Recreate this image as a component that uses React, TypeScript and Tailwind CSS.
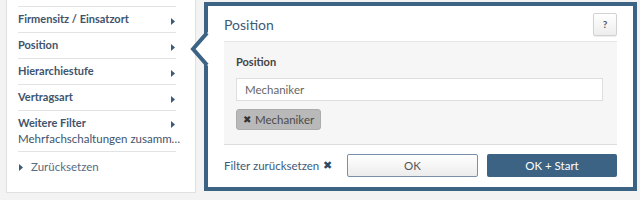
import React from "react";

const filters = ["Firmensitz / Einsatzort", "Position", "Hierarchiestufe", "Vertragsart"];

function Caret({ className = "" }: { className?: string }) {
  return (
    <svg width="4" height="7" viewBox="0 0 4 7" className={className}>
      <path d="M0 0 L4 3.5 L0 7 Z" fill="#3d5a7a" />
    </svg>
  );
}

function Sidebar() {
  return (
    <div className="ml-[6px] h-[193px] w-[190px] shrink-0 border-x border-b border-[#e0e0e0] bg-white pl-[11px] pr-[19px] pt-[6px]">
      {filters.map((f) => (
        <div
          key={f}
          className="flex h-[26px] items-center justify-between border-t border-[#e3e3e3] pr-[1px] text-[11px] font-bold text-[#3f536b]"
        >
          <span>{f}</span>
          <Caret className="mt-[3px]" />
        </div>
      ))}
      <div className="h-[41px] border-t border-[#e3e3e3] pt-[4px] text-[11.5px] leading-[16px] text-[#3f536b]">
        <div className="flex items-center justify-between pr-[1px]">
          <span className="text-[11px] font-bold">Weitere Filter</span>
          <Caret className="mt-[3px]" />
        </div>
        <div className="whitespace-nowrap">Mehrfachschaltungen zusamm…</div>
      </div>
      <div className="flex h-[30px] items-center gap-[8px] border-t border-[#e3e3e3] pt-[1px] text-[11.5px] text-[#566b83]">
        <Caret className="ml-[1px] mt-[1px]" />
        <span>Zurücksetzen</span>
      </div>
    </div>
  );
}

function Popup() {
  return (
    <div className="relative ml-[8px] mt-[2px] flex h-[189px] w-[433px] flex-col border-4 border-[#3d6384] bg-white px-[16px]">
      <svg
        width="20"
        height="34"
        viewBox="0 0 20 34"
        className="absolute left-[-18px] top-[26px]"
      >
        <path d="M18 0 L3 17 L18 34 Z" fill="white" />
        <path d="M17 1 L3 17 L17 33" fill="none" stroke="#3d6384" strokeWidth="4" />
      </svg>
      <div className="flex h-[35px] shrink-0 items-center justify-between">
        <span className="mt-[1px] text-[14px] text-[#3d5a78]">Position</span>
        <button className="mt-[2px] h-[23px] w-[24px] rounded-[2px] border border-[#d2d2d2] bg-gradient-to-b from-white to-[#ededed] text-[10px] font-bold text-[#555] shadow-[0_1px_1px_rgba(0,0,0,0.08)]">
          ?
        </button>
      </div>
      <div className="h-[104px] shrink-0 border-y border-t-[#e6e6e6] border-b-[#dcdcdc] bg-[#f6f6f6] pl-[12px] pr-[14px] pt-[12px]">
        <div className="text-[11px] font-bold leading-[16px] text-[#444]">Position</div>
        <div className="mt-[8px] flex h-[23px] items-center border border-[#dedede] bg-white px-[8px] text-[11.5px] text-[#666]">
          Mechaniker
        </div>
        <div className="mt-[8px] inline-flex h-[21px] items-center gap-[4px] rounded-[3px] border border-[#acacac] bg-[#b9b9b9] pl-[6px] pr-[6px] text-[11.5px] text-[#4a4a4a]">
          <span className="text-[10px] text-[#333]">✖</span>
          <span>Mechaniker</span>
        </div>
      </div>
      <div className="flex flex-1 items-center pb-[1px]">
        <span className="flex items-center gap-[4px] text-[11.5px] text-[#3d5a78]">
          Filter zurücksetzen <span className="text-[11px] text-[#2f4a66]">✖</span>
        </span>
        <button className="ml-auto h-[23px] w-[131px] rounded-[2px] border border-[#7990a8] bg-gradient-to-b from-white to-[#ececec] text-[11.5px] text-[#555]">
          OK
        </button>
        <button className="ml-[9px] h-[23px] w-[130px] rounded-[2px] bg-[#3d6384] text-[11.5px] text-white">
          OK + Start
        </button>
      </div>
    </div>
  );
}

export default function App() {
  return (
    <div className="flex h-[200px] w-[640px] items-start bg-[#f3f3f3] font-['Lato',sans-serif]">
      <Sidebar />
      <Popup />
    </div>
  );
}
